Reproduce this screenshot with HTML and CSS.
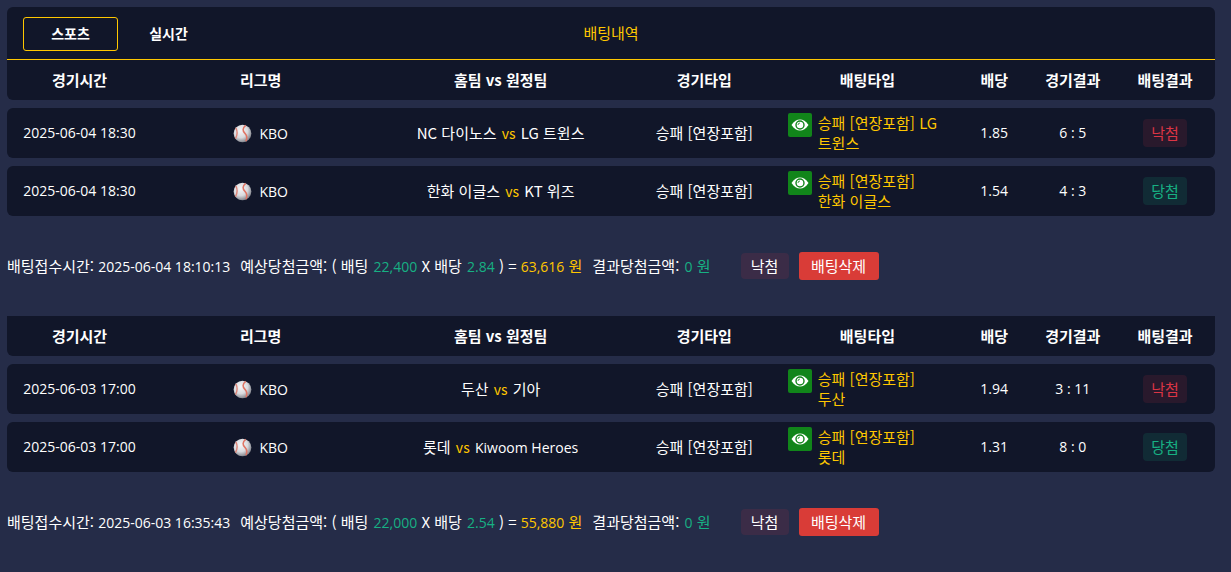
FILE: index.html
```html
<!DOCTYPE html>
<html lang="ko">
<head>
    <meta charset="UTF-8">
    <meta name="viewport" content="width=device-width, initial-scale=1">
    <title>배팅내역</title>
    <link rel="stylesheet" href="styles.css">
</head>
<body>
    <!-- shared icons -->
    <svg class="sprite" aria-hidden="true">
        <defs>
            <radialGradient id="ballShade" cx="40%" cy="35%" r="65%">
                <stop offset="0" stop-color="#f6f6f8"/>
                <stop offset="0.6" stop-color="#d9dade"/>
                <stop offset="1" stop-color="#85878f"/>
            </radialGradient>
        </defs>
        <symbol id="ball" viewBox="0 0 20 20">
            <circle cx="10" cy="10" r="9.3" fill="url(#ballShade)"/>
            <path d="M3 4C4.8 7.4 4.6 11.8 2.6 15.4" fill="none" stroke="#e08578" stroke-width="1.5"/>
            <path d="M13.4 1.4C9.6 4.4 10.2 7.4 12.4 9.6C14.8 12 15 15 13.6 18.2" fill="none" stroke="#e07464" stroke-width="1.6"/>
        </symbol>
        <symbol id="eye" viewBox="0 0 18 12">
            <path d="M0.5 6C3 2 6 0.5 9 0.5S15 2 17.5 6C15 10 12 11.5 9 11.5S3 10 0.5 6Z" fill="#fff"/>
            <circle cx="9" cy="6" r="4" fill="none" stroke="#11851a" stroke-width="1.4"/>
            <path d="M7 6A2 2 0 0 1 9 4" fill="none" stroke="#11851a" stroke-width="0.8"/>
        </symbol>
    </svg>

    <div class="top-bar">
        <div class="tabs">
            <button type="button" class="tab active">스포츠</button>
            <button type="button" class="tab">실시간</button>
        </div>
        <h1>배팅내역</h1>
    </div>

    <div class="bet-group">
        <table class="bet-table">
            <thead>
                <tr>
                    <th class="col-time">경기시간</th>
                    <th class="col-league">리그명</th>
                    <th class="col-teams">홈팀 vs 원정팀</th>
                    <th class="col-type">경기타입</th>
                    <th class="col-pick">배팅타입</th>
                    <th class="col-odds">배당</th>
                    <th class="col-score">경기결과</th>
                    <th class="col-result">배팅결과</th>
                </tr>
            </thead>
            <tbody>
                <tr>
                    <td class="num">2025-06-04 18:30</td>
                    <td><span class="league num"><svg class="ball"><use href="#ball"/></svg>KBO</span></td>
                    <td>NC 다이노스 <span class="vs">vs</span> LG 트윈스</td>
                    <td>승패 [연장포함]</td>
                    <td class="pick-cell"><div class="pick"><button type="button" class="view" aria-label="보기"><svg><use href="#eye"/></svg></button><span>승패 [연장포함] LG 트윈스</span></div></td>
                    <td class="num">1.85</td>
                    <td class="num">6 : 5</td>
                    <td><span class="badge lose">낙첨</span></td>
                </tr>
                <tr>
                    <td class="num">2025-06-04 18:30</td>
                    <td><span class="league num"><svg class="ball"><use href="#ball"/></svg>KBO</span></td>
                    <td>한화 이글스 <span class="vs">vs</span> KT 위즈</td>
                    <td>승패 [연장포함]</td>
                    <td class="pick-cell"><div class="pick"><button type="button" class="view" aria-label="보기"><svg><use href="#eye"/></svg></button><span>승패 [연장포함] 한화 이글스</span></div></td>
                    <td class="num">1.54</td>
                    <td class="num">4 : 3</td>
                    <td><span class="badge win">당첨</span></td>
                </tr>
            </tbody>
        </table>
        <div class="summary">
            <span>배팅접수시간: <span class="num">2025-06-04 18:10:13</span></span>
            <span>예상당첨금액: ( 배팅 <span class="num green">22,400</span> X 배당 <span class="num green">2.84</span> ) = <span class="gold"><span class="num">63,616</span> 원</span></span>
            <span>결과당첨금액: <span class="green"><span class="num">0</span> 원</span></span>
            <span class="badge state">낙첨</span>
            <button type="button" class="delete">배팅삭제</button>
        </div>
    </div>

    <div class="bet-group">
        <table class="bet-table">
            <thead>
                <tr>
                    <th class="col-time">경기시간</th>
                    <th class="col-league">리그명</th>
                    <th class="col-teams">홈팀 vs 원정팀</th>
                    <th class="col-type">경기타입</th>
                    <th class="col-pick">배팅타입</th>
                    <th class="col-odds">배당</th>
                    <th class="col-score">경기결과</th>
                    <th class="col-result">배팅결과</th>
                </tr>
            </thead>
            <tbody>
                <tr>
                    <td class="num">2025-06-03 17:00</td>
                    <td><span class="league num"><svg class="ball"><use href="#ball"/></svg>KBO</span></td>
                    <td>두산 <span class="vs">vs</span> 기아</td>
                    <td>승패 [연장포함]</td>
                    <td class="pick-cell"><div class="pick"><button type="button" class="view" aria-label="보기"><svg><use href="#eye"/></svg></button><span>승패 [연장포함] 두산</span></div></td>
                    <td class="num">1.94</td>
                    <td class="num">3 : 11</td>
                    <td><span class="badge lose">낙첨</span></td>
                </tr>
                <tr>
                    <td class="num">2025-06-03 17:00</td>
                    <td><span class="league num"><svg class="ball"><use href="#ball"/></svg>KBO</span></td>
                    <td>롯데 <span class="vs">vs</span> <span class="num">Kiwoom Heroes</span></td>
                    <td>승패 [연장포함]</td>
                    <td class="pick-cell"><div class="pick"><button type="button" class="view" aria-label="보기"><svg><use href="#eye"/></svg></button><span>승패 [연장포함] 롯데</span></div></td>
                    <td class="num">1.31</td>
                    <td class="num">8 : 0</td>
                    <td><span class="badge win">당첨</span></td>
                </tr>
            </tbody>
        </table>
        <div class="summary">
            <span>배팅접수시간: <span class="num">2025-06-03 16:35:43</span></span>
            <span>예상당첨금액: ( 배팅 <span class="num green">22,000</span> X 배당 <span class="num green">2.54</span> ) = <span class="gold"><span class="num">55,880</span> 원</span></span>
            <span>결과당첨금액: <span class="green"><span class="num">0</span> 원</span></span>
            <span class="badge state">낙첨</span>
            <button type="button" class="delete">배팅삭제</button>
        </div>
    </div>
</body>
</html>
```
FILE: styles.css
```css
* {
    box-sizing: border-box;
}
body {
    margin: 0;
    padding: 7px 16px 0 7px;
    background-color: #252c48;
    color: #fff;
    font-family: "Noto Sans CJK KR", sans-serif;
    font-size: 15px;
    line-height: 20px;
    word-break: keep-all;
}
button {
    font-family: inherit;
    line-height: 20px;
    color: #fff;
    cursor: pointer;
}
.sprite {
    position: absolute;
    width: 0;
    height: 0;
}
.num {
    font-family: "Open Sans", "Noto Sans CJK KR", sans-serif;
    font-size: 14px;
}
.gold {
    color: #ffc700;
}
.vs {
    margin: 0 1px;
    color: #ffc700;
    font-size: 14px;
}
.green {
    margin-left: 1px;
    color: #17b083;
}

/* top bar */
.top-bar {
    display: grid;
    grid-template-columns: 1fr auto 1fr;
    align-items: center;
    height: 53px;
    padding: 0 16px;
    background-color: #111629;
    border-bottom: 1px solid #ffc700;
    border-radius: 6px 6px 0 0;
}
.top-bar h1 {
    margin: 0;
    color: #ffc700;
    font-size: 15px;
    font-weight: normal;
}
.tabs {
    display: flex;
    gap: 3px;
    padding-top: 2px;
}
.tab {
    width: 95px;
    height: 34px;
    padding: 0 0 2px;
    background: none;
    border: 1px solid transparent;
    border-radius: 3px;
    font-size: 14px;
    font-weight: bold;
}
.tab.active {
    border-color: #ffc700;
}

/* bet list */
.bet-table {
    width: 100%;
    margin: -8px 0;
    table-layout: fixed;
    border-collapse: separate;
    border-spacing: 0 8px;
    text-align: center;
}
.bet-table th,
.bet-table td {
    padding: 0;
    background-color: #111629;
}
.bet-table th {
    height: 40px;
}
.bet-table td {
    height: 50px;
}
.bet-table th:first-child {
    border-bottom-left-radius: 6px;
}
.bet-table th:last-child {
    border-bottom-right-radius: 6px;
}
.bet-table td:first-child {
    border-radius: 6px 0 0 6px;
}
.bet-table td:last-child {
    border-radius: 0 6px 6px 0;
}
.col-time, .col-type {
    width: 12%;
}
.col-league {
    width: 18%;
}
.col-pick {
    width: 15%;
}
.col-odds {
    width: 6%;
}
.col-score {
    width: 7%;
}
.col-result {
    width: 100px;
}
.league {
    display: inline-flex;
    align-items: center;
    gap: 7px;
    vertical-align: middle;
}
.ball {
    width: 19px;
    height: 19px;
}
.bet-table .pick-cell {
    padding: 0 16px 0 11px;
}
.pick {
    display: flex;
    align-items: flex-start;
    gap: 6px;
    color: #ffc700;
    text-align: left;
}
.view {
    display: flex;
    flex: none;
    align-items: center;
    justify-content: center;
    width: 24px;
    height: 24px;
    padding: 0;
    background-color: #11851a;
    border: none;
    border-radius: 2px;
}
.view svg {
    width: 18px;
    height: 12px;
}
.badge {
    display: inline-block;
    padding: 4px 8px;
    border-radius: 4px;
}
.lose {
    background-color: rgba(220, 53, 69, 0.12);
    color: #dc3545;
}
.win {
    background-color: rgba(23, 176, 131, 0.14);
    color: #17b083;
}

/* summary line */
.summary {
    display: flex;
    align-items: center;
    gap: 10px;
    height: 100px;
}
.state {
    width: 48px;
    margin-left: 20px;
    padding: 3px 0;
    background-color: rgba(220, 53, 69, 0.12);
    text-align: center;
}
.delete {
    width: 80px;
    height: 28px;
    padding: 0;
    background-color: #d93c37;
    border: none;
    border-radius: 3px;
    font-size: 15px;
}
```
